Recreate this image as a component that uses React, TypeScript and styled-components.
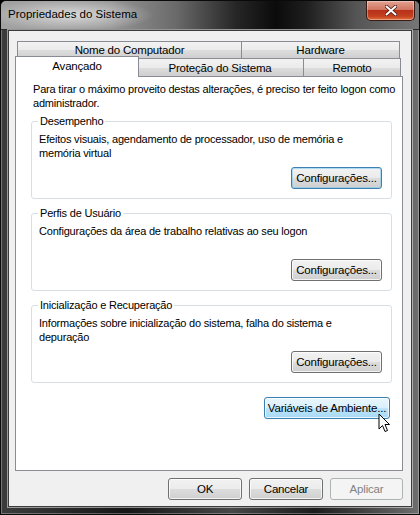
import styled, { createGlobalStyle, css } from "styled-components";

const GlobalStyle = createGlobalStyle`
  html, body {
    margin: 0;
    padding: 0;
    background: #000;
  }
  body {
    font-family: "Liberation Sans", Arial, sans-serif;
  }
`;

const Window = styled.div`
  position: relative;
  box-sizing: border-box;
  width: 420px;
  height: 515px;
  display: flex;
  flex-direction: column;
  padding: 0 7px 7px 7px;
  border: 1px solid #0a0a0a;
  border-radius: 6px 6px 0 0;
  background: linear-gradient(
    to right,
    #3c3c3c 0,
    #161616 30%,
    #474747 55%,
    #1c1c1c 75%,
    #6e6e6e 100%
  );
  box-shadow: inset 0 0 0 1px rgba(255, 255, 255, 0.3);
  overflow: hidden;
`;

const TitleBar = styled.div`
  display: flex;
  align-items: flex-start;
  justify-content: space-between;
  height: 28px;
  margin: 0 -7px;
  padding: 0 4px 0 7px;
  background: radial-gradient(
      ellipse 110px 22px at 70px 14px,
      rgba(240, 240, 240, 0.75),
      rgba(220, 220, 220, 0) 75%
    ),
    linear-gradient(
      to right,
      #a2a2a2 0,
      #969696 110px,
      #6a6a6a 175px,
      #262626 235px,
      #0b0b0b 275px,
      #1e1e1e 305px,
      #555 355px,
      #777 420px
    );
  border-bottom: 1px solid #2a2a2a;
`;

const Title = styled.span`
  margin-top: 7px;
  font-size: 11.5px;
  color: #000;
`;

const CloseButton = styled.div`
  display: flex;
  align-items: center;
  justify-content: center;
  width: 47px;
  height: 19px;
  border: 1px solid #3a1a12;
  border-top: none;
  border-radius: 0 0 5px 5px;
  background: linear-gradient(
    to bottom,
    #e2a293 0%,
    #d27762 45%,
    #b8301a 50%,
    #c2401f 80%,
    #e4713f 100%
  );
  box-shadow: inset 0 0 0 1px rgba(255, 255, 255, 0.35);
`;

const Client = styled.div`
  flex: 1;
  display: flex;
  flex-direction: column;
  padding: 10px 8px 0 6px;
  background: #f0f0f0;
  border: 1px solid #3c3c3c;
  box-shadow: 0 0 0 1px rgba(235, 235, 235, 0.55);
`;

const TabRow = styled.div<{ $back?: boolean }>`
  display: flex;
  height: ${(p) => (p.$back ? "17px" : "18px")};
  padding: ${(p) => (p.$back ? "0 3px 0 3px" : "0 2px 0 3px")};
`;

const Tab = styled.div<{ $width?: number; $selected?: boolean }>`
  position: relative;
  ${(p) => (p.$width ? `flex: 0 0 ${p.$width}px;` : "flex: 1;")}
  display: flex;
  align-items: center;
  justify-content: center;
  margin-left: -1px;
  border: 1px solid #898c95;
  border-bottom: none;
  font-size: 11.5px;
  letter-spacing: -0.2px;
  color: #000;
  background: linear-gradient(
    to bottom,
    #f2f2f2 0%,
    #ebebeb 50%,
    #dddddd 51%,
    #cfcfcf 100%
  );

  ${(p) =>
    p.$selected &&
    css`
      z-index: 1;
      margin: -2px -2px -1px -3px;
      padding-bottom: 3px;
      background: #fff;
    `}
`;

const Panel = styled.div`
  box-sizing: border-box;
  height: 395px;
  display: flex;
  flex-direction: column;
  padding: 5px 10px 0 15px;
  background: #fff;
  border: 1px solid #898c95;
`;

const Text = styled.p`
  margin: 0;
  font-size: 11px;
  line-height: 14px;
  letter-spacing: -0.2px;
  color: #000;
`;

const Intro = styled(Text)`
  margin: 0 -4px 4px 2px;
`;

const Group = styled.fieldset`
  margin: 0 0 7px;
  padding: 0 9px 9px 7px;
  border: 1px solid #d5dfe5;
  border-radius: 3px;
  min-width: 0;
`;

const Legend = styled.legend`
  margin-left: -1px;
  padding: 0 2px;
  font-size: 11px;
  line-height: 14px;
  letter-spacing: -0.2px;
  color: #000;
`;

const GroupBody = styled.div`
  height: 61px;
  display: flex;
  flex-direction: column;
  justify-content: space-between;
  padding-top: 4px;
  box-sizing: border-box;
`;

const ButtonRow = styled.div`
  display: flex;
  justify-content: flex-end;
`;

type Variant = "normal" | "focused" | "hover" | "disabled";

const Button = styled.button<{ $variant?: Variant; $width: number }>`
  box-sizing: border-box;
  width: ${(p) => p.$width}px;
  height: 22px;
  padding: 0;
  font-family: "Liberation Sans", Arial, sans-serif;
  font-size: 11.5px;
  letter-spacing: -0.2px;
  color: #000;
  border: 1px solid #707070;
  border-radius: 3px;
  background: linear-gradient(
    to bottom,
    #f2f2f2 0%,
    #ebebeb 49%,
    #dddddd 50%,
    #cfcfcf 100%
  );
  box-shadow: inset 0 0 0 1px rgba(255, 255, 255, 0.75);

  ${(p) =>
    p.$variant === "focused" &&
    css`
      border-color: #3c7fb1;
      box-shadow: inset 0 0 0 1px rgba(120, 200, 240, 0.55);
    `}

  ${(p) =>
    p.$variant === "hover" &&
    css`
      border-color: #3c7fb1;
      background: linear-gradient(
        to bottom,
        #eaf6fd 0%,
        #d9f0fc 49%,
        #bee6fd 50%,
        #a7d9f5 100%
      );
    `}

  ${(p) =>
    p.$variant === "disabled" &&
    css`
      color: #838383;
      border-color: #adb2b5;
      background: #f4f4f4;
      box-shadow: none;
    `}
`;

const EnvRow = styled.div`
  display: flex;
  justify-content: flex-end;
  margin-top: 7px;
  padding-right: 2px;
`;

const Footer = styled.div`
  display: flex;
  justify-content: flex-end;
  gap: 7px;
  margin-top: 7px;
`;

const Cursor = styled.svg`
  position: absolute;
  left: 377px;
  top: 412px;
`;

const groups = [
  {
    title: "Desempenho",
    text: "Efeitos visuais, agendamento de processador, uso de memória e memória virtual",
    focused: true,
  },
  {
    title: "Perfis de Usuário",
    text: "Configurações da área de trabalho relativas ao seu logon",
    focused: false,
  },
  {
    title: "Inicialização e Recuperação",
    text: "Informações sobre inicialização do sistema, falha do sistema e depuração",
    focused: false,
  },
];

export default function App() {
  return (
    <>
      <GlobalStyle />
      <Window>
        <TitleBar>
          <Title>Propriedades do Sistema</Title>
          <CloseButton>
            <svg width="12" height="11" viewBox="0 0 12 11">
              <path
                d="M1.5 1.5 L10.5 9.5 M10.5 1.5 L1.5 9.5"
                stroke="#4a1a10"
                strokeWidth="3.6"
                strokeLinecap="round"
              />
              <path
                d="M1.5 1.5 L10.5 9.5 M10.5 1.5 L1.5 9.5"
                stroke="#fff"
                strokeWidth="2"
                strokeLinecap="round"
              />
            </svg>
          </CloseButton>
        </TitleBar>
        <Client>
          <TabRow $back>
            <Tab $width={223}>Nome do Computador</Tab>
            <Tab>Hardware</Tab>
          </TabRow>
          <TabRow>
            <Tab $width={122} $selected>
              Avançado
            </Tab>
            <Tab $width={166}>Proteção do Sistema</Tab>
            <Tab>Remoto</Tab>
          </TabRow>
          <Panel>
            <Intro>
              Para tirar o máximo proveito destas alterações, é preciso ter
              feito logon como administrador.
            </Intro>
            {groups.map((g) => (
              <Group key={g.title}>
                <Legend>{g.title}</Legend>
                <GroupBody>
                  <Text>{g.text}</Text>
                  <ButtonRow>
                    <Button
                      $width={91}
                      $variant={g.focused ? "focused" : "normal"}
                    >
                      Configurações...
                    </Button>
                  </ButtonRow>
                </GroupBody>
              </Group>
            ))}
            <EnvRow>
              <Button $width={126} $variant="hover">
                Variáveis de Ambiente...
              </Button>
            </EnvRow>
          </Panel>
          <Footer>
            <Button $width={74}>OK</Button>
            <Button $width={74}>Cancelar</Button>
            <Button $width={73} $variant="disabled">
              Aplicar
            </Button>
          </Footer>
        </Client>
        <Cursor width="14" height="21" viewBox="0 0 14 21">
          <path
            d="M1 1 L1 16 L4.5 12.5 L7 18.5 L9.5 17.5 L7 11.5 L11.5 11.5 Z"
            fill="#fff"
            stroke="#000"
            strokeWidth="1"
            strokeLinejoin="miter"
          />
        </Cursor>
      </Window>
    </>
  );
}
